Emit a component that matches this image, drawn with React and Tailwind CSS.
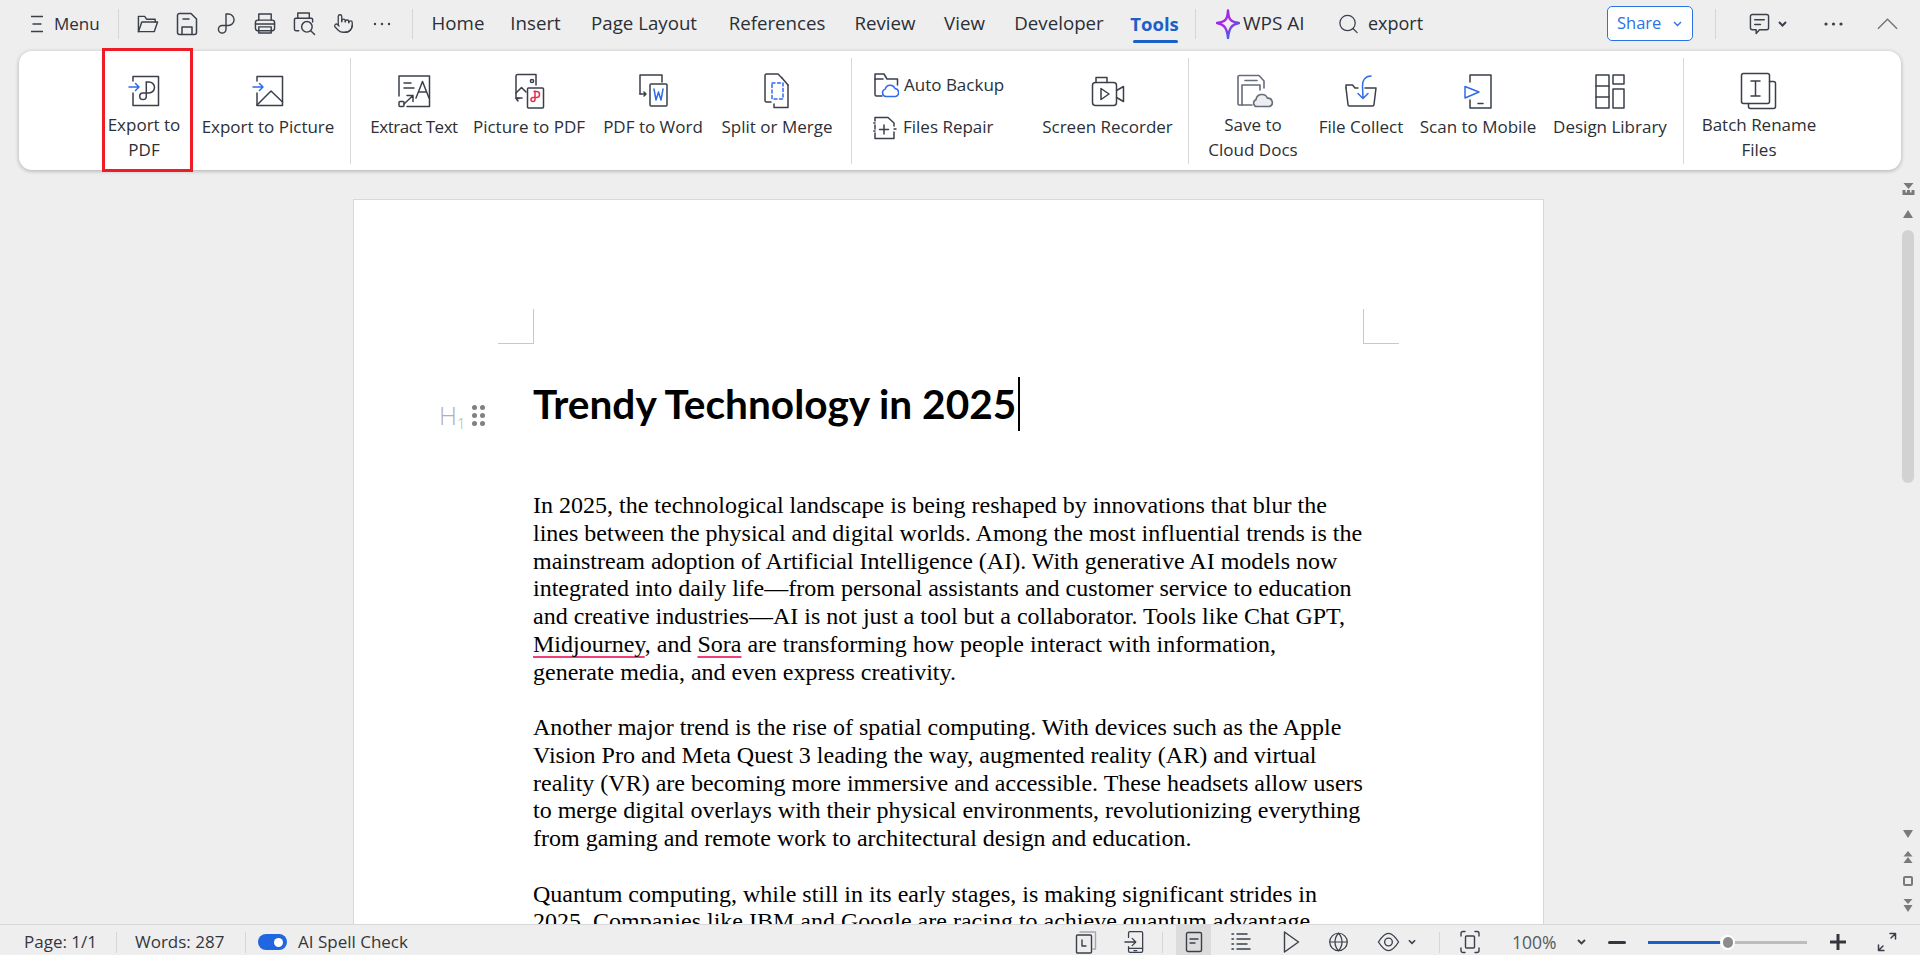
import React from "react";
import { Search, Pointer, Globe } from "lucide-react";

const INK = "#3a3f4a";
const BLUE = "#2f6bed";
const RED = "#e5304f";

function Ico({ w, h, children, sw = 1.5 }) {
  return (
    <svg width={w} height={h} viewBox={`0 0 ${w} ${h}`} fill="none" stroke={INK} strokeWidth={sw} strokeLinecap="round" strokeLinejoin="round">
      {children}
    </svg>
  );
}

const ExportPdfIcon = () => (
  <Ico w={32} h={32}>
    <path d="M5 6V1.5H30.5V30.5H5V18" />
    <path d="M1 12H11M7.5 8.5L11 12L7.5 15.5" stroke={BLUE} />
    <path d="M18 7h3a5.5 5.5 0 0 1 0 11H15a3.3 3.3 0 1 0 3.3 3.3V7" />
  </Ico>
);
const ExportPicIcon = () => (
  <Ico w={32} h={32}>
    <path d="M5 6V1.5H30.5V30.5H5V18" />
    <path d="M1 12H11M7.5 8.5L11 12L7.5 15.5" stroke={BLUE} />
    <path d="M5 30L19 16L30.5 27" />
  </Ico>
);
const ExtractIcon = () => (
  <Ico w={34} h={34}>
    <path d="M2 22V2H32.5V32.5H10" />
    <path d="M7 9H14M7 14H17" />
    <path d="M19 24L25.5 7.5L32 24M21.5 18H29.5" />
    <path d="M10 21.5H16V27.5M16 21.5L7 30" />
    <rect x="2" y="27.5" width="5" height="5" rx="1" />
  </Ico>
);
const PicPdfIcon = () => (
  <Ico w={32} h={36}>
    <path d="M3 25V3a1.5 1.5 0 0 1 1.5-1.5H23V12M3 25H9" />
    <circle cx="19" cy="8" r="1.6" />
    <path d="M3 20L8.5 14.5L13 19M5 28L3 25.5M3 25.5H6" />
    <rect x="14.5" y="15" width="16" height="20" rx="1" />
    <path d="M21 18.5h2.5a3 3 0 0 1 0 6H20a2 2 0 1 0 2 2v-8.5" stroke={RED} />
  </Ico>
);
const PdfWordIcon = () => (
  <Ico w={32} h={36}>
    <path d="M3 21V2H25V9" />
    <path d="M3 21L9 21M7 19L9 21L7 23" />
    <rect x="13" y="11" width="17" height="22" rx="1" />
    <path d="M17 16L19 27L21.5 19L24 27L26 16" stroke={BLUE} />
  </Ico>
);
const SplitIcon = () => (
  <Ico w={28} h={38}>
    <path d="M8 30H3.5A1.5 1.5 0 0 1 2 28.5V3.5A1.5 1.5 0 0 1 3.5 2H15L19 6" />
    <path d="M25 13V35.5H11V32" />
    <path d="M19 6L25 13" />
    <rect x="9" y="11" width="11" height="16" stroke={BLUE} strokeDasharray="3 2.5" />
  </Ico>
);
const BackupIcon = () => (
  <Ico w={26} h={26}>
    <path d="M9 24H3.5A1.5 1.5 0 0 1 2 22.5V2H11L14 7H24.5V13" />
    <path d="M2 7H10" />
    <path d="M13 24.5a3.8 3.8 0 0 1-.8-7.4a5.2 5.2 0 0 1 9.8-.6a4.1 4.1 0 0 1 .7 8z" stroke={BLUE} />
  </Ico>
);
const RepairIcon = () => (
  <Ico w={24} h={26}>
    <path d="M2 7V3.5H15L21 9V12M2 11V15M2 19V24.5H21V18M2 9H0.8M2 17H0.8M21 15H23" />
    <path d="M11 11V20M6.5 15.5H15.5" />
  </Ico>
);
const RecorderIcon = () => (
  <Ico w={34} h={32}>
    <rect x="1.5" y="7.5" width="24" height="23" rx="3" />
    <path d="M5 7.5V2.5H16V7.5" />
    <path d="M25.5 15.5L32.5 11.5V26.5L25.5 22.5" />
    <path d="M10 13.5L18 19L10 24.5Z" />
  </Ico>
);
const CloudDocsIcon = () => (
  <svg className="ml-[8px]" width="44" height="34" viewBox="0 0 44 34" fill="none" stroke="#666c78" strokeWidth="1.6" strokeLinecap="round" strokeLinejoin="round">
    <path d="M17 31H4.5A1.5 1.5 0 0 1 3 29.5V3A1.5 1.5 0 0 1 4.5 1.5H24L29 7V14" />
    <path d="M10 6.5H22" />
    <path d="M7 31V11H25V16" />
    <path d="M22 32.5a3.5 3.5 0 0 1-1-6.8a6 6 0 0 1 11.5-1.5a4.3 4.3 0 0 1 2 8.3z" fill="#eceef2" />
  </svg>
);
const CollectIcon = () => (
  <Ico w={34} h={34}>
    <path d="M2 14L4 30.5A1.5 1.5 0 0 0 5.5 32H28.5A1.5 1.5 0 0 0 30 30.5L32 14H21" />
    <path d="M2 14V11H8.5L11 14H14" />
    <path d="M27 2C21 2 18 7 18.5 12L19 24M14 19.5L19 24.5L24 19.5" stroke={BLUE} />
  </Ico>
);
const ScanIcon = () => (
  <Ico w={28} h={36}>
    <path d="M6 9V2H27V35H6V27" />
    <path d="M1 13.5L15 19L1 25V13.5Z" stroke={BLUE} />
    <path d="M14 30.5H19" />
  </Ico>
);
const LibraryIcon = () => (
  <Ico w={32} h={36}>
    <rect x="2" y="2" width="13" height="33" />
    <path d="M2 13H15M2 24H15" />
    <rect x="19" y="2" width="11" height="9" />
    <rect x="19" y="16" width="11" height="19" />
  </Ico>
);
const RenameIcon = () => (
  <Ico w={38} h={38}>
    <rect x="1.5" y="1.5" width="28" height="30" rx="2" />
    <path d="M29.5 9.5H33.5A2 2 0 0 1 35.5 11.5V34.5A2 2 0 0 1 33.5 36.5H10.5A2 2 0 0 1 8.5 34.5V31.5" />
    <path d="M11 9H20M11 24H20M15.5 9V24" />
  </Ico>
);

function Item({ w, two, icon, tc = "", children }) {
  return (
    <div className={`${w} flex flex-col items-center pt-[23px] shrink-0`}>
      <div className="h-[34px] flex items-center justify-center">{icon}</div>
      <div className={`${two ? "mt-[4px]" : "mt-[6px]"} text-center text-[17px] leading-[25px] whitespace-nowrap ${tc}`}>{children}</div>
    </div>
  );
}

const RibbonSep = ({ className = "" }) => <div className={`w-px h-[106px] self-center bg-[#d8d8d8] shrink-0 ${className}`} />;
const TopSep = ({ className }) => <div className={`w-px h-[30px] bg-[#d6d6d6] shrink-0 ${className}`} />;

const Tab = ({ className, children }) => <div className={`flex justify-center text-[18.7px] whitespace-nowrap shrink-0 ${className}`}>{children}</div>;

function ToolSlot({ className, children }) {
  return <div className={`flex items-center justify-center shrink-0 ${className}`}>{children}</div>;
}

const Line = ({ children }) => <div className="whitespace-nowrap">{children}</div>;
const Sp = ({ children }) => <span className="underline decoration-[#f0407a] decoration-2 underline-offset-[4px] [text-decoration-skip-ink:none]">{children}</span>;

function Tri({ d }) {
  return (
    <svg width="12" height="12" viewBox="0 0 12 12" fill="#7a7a7a">
      <path d={d} />
    </svg>
  );
}

export default function App() {
  return (
    <div className="h-screen w-full overflow-hidden flex flex-col bg-[#eeeeee] text-[#2b2f36] font-['Open_Sans','Noto_Sans',sans-serif]">
      {/* Title bar */}
      <header className="h-[51px] shrink-0 flex items-center pb-[4px]">
        <ToolSlot className="ml-[31px] w-[12px]">
          <svg width="12" height="18" viewBox="0 0 12 18" stroke={INK} strokeWidth="1.4"><path d="M0 1.5H12M1.5 9H10.5M0 16.5H12" /></svg>
        </ToolSlot>
        <div className="ml-[11px] w-[46px] text-[17px] whitespace-nowrap">Menu</div>
        <TopSep className="ml-[18px]" />
        <ToolSlot className="ml-[18px] w-[22px]">
          <Ico w={23} h={20}>
            <path d="M1.5 18V2H8L10 5H19V8" />
            <path d="M1.5 18L5 8H21.5L18 18Z" />
          </Ico>
        </ToolSlot>
        <ToolSlot className="ml-[17px] w-[22px]">
          <Ico w={22} h={24}>
            <path d="M6 1.5H15L20.5 7V20.5A2 2 0 0 1 18.5 22.5H3.5A2 2 0 0 1 1.5 20.5V3.5A2 2 0 0 1 3.5 1.5H6Z" />
            <path d="M7 7H13" />
            <path d="M6 22V15H16V22" />
          </Ico>
        </ToolSlot>
        <ToolSlot className="ml-[19px] w-[18px]">
          <Ico w={19} h={24}>
            <path d="M9.5 1.5H12a6 6 0 0 1 0 12H5.5a4 4 0 1 0 4 4V1.5" />
          </Ico>
        </ToolSlot>
        <ToolSlot className="ml-[19px] w-[22px]">
          <Ico w={23} h={23}>
            <path d="M5 8V1.5H18V8" />
            <rect x="1.5" y="8" width="20" height="11" rx="2.5" />
            <path d="M5 15V21.5H18V15Z" />
            <path d="M1.5 12H21.5" />
          </Ico>
        </ToolSlot>
        <ToolSlot className="ml-[17px] w-[23px]">
          <Ico w={24} h={25}>
            <path d="M5 7V1.5H17V7" />
            <path d="M6 20H3A1.5 1.5 0 0 1 1.5 18.5V8.5A1.5 1.5 0 0 1 3 7H19A1.5 1.5 0 0 1 20.5 8.5V11" />
            <circle cx="14.5" cy="16" r="5.5" />
            <path d="M18.5 20L22.5 24" />
          </Ico>
        </ToolSlot>
        <ToolSlot className="ml-[17px] w-[21px]">
          <Pointer size={25} strokeWidth={1.5} color={INK} />
        </ToolSlot>
        <ToolSlot className="ml-[18px] w-[20px]">
          <svg width="20" height="4" viewBox="0 0 20 4" fill={INK}><circle cx="3" cy="2" r="1.2" /><circle cx="10" cy="2" r="1.2" /><circle cx="17" cy="2" r="1.2" /></svg>
        </ToolSlot>
        <TopSep className="ml-[20px]" />
        <Tab className="ml-[19px] w-[52px]">Home</Tab>
        <Tab className="ml-[28px] w-[47px]">Insert</Tab>
        <Tab className="ml-[33px] w-[104px]">Page Layout</Tab>
        <Tab className="ml-[36px] w-[90px]">References</Tab>
        <Tab className="ml-[33px] w-[60px]">Review</Tab>
        <Tab className="ml-[29px] w-[41px]">View</Tab>
        <Tab className="ml-[29px] w-[90px]">Developer</Tab>
        <div className="relative ml-[26px] w-[49px] shrink-0 flex justify-center">
          <div className="text-[18.5px] font-bold text-[#1b5fc9] whitespace-nowrap">Tools</div>
          <div className="absolute left-[3px] right-[1px] top-[30px] h-[3px] rounded-full bg-[#1b5fc9]" />
        </div>
        <TopSep className="ml-[16px]" />
        <ToolSlot className="ml-[20px] w-[24px]">
          <svg width="24" height="30" viewBox="0 0 24 30" fill="none" strokeWidth="2.4" strokeLinejoin="round">
            <defs>
              <linearGradient id="st" x1="0" y1="0" x2="0.7" y2="1">
                <stop offset="0" stopColor="#7b2ff7" />
                <stop offset="0.5" stopColor="#b026e0" />
                <stop offset="1" stopColor="#2f6bed" />
              </linearGradient>
            </defs>
            <path d="M12 1.5C12.5 10 14 13 23 14C15 15.5 13 20 12 29C11 20 9 15.5 1 14C10 13 11.5 10 12 1.5Z" stroke="url(#st)" />
          </svg>
        </ToolSlot>
        <div className="ml-[3px] w-[64px] text-[19px] whitespace-nowrap">WPS AI</div>
        <ToolSlot className="ml-[30px] w-[23px]">
          <Search size={28} strokeWidth={1.3} color={INK} />
        </ToolSlot>
        <div className="ml-[8px] w-[54px] text-[18px] whitespace-nowrap">export</div>
        <div className="ml-[185px] w-[86px] h-[35px] shrink-0 rounded-[5px] border border-[#2a72e6] bg-white flex items-center text-[#2a72e6] text-[16.5px] pl-[9px] gap-[12px]">
          <span>Share</span>
          <svg width="9" height="6" viewBox="0 0 9 6" fill="none" stroke="#2a72e6" strokeWidth="1.4"><path d="M1 1L4.5 4.5L8 1" /></svg>
        </div>
        <TopSep className="ml-[22px]" />
        <ToolSlot className="ml-[33px] w-[21px]">
          <Ico w={22} h={24}>
            <path d="M3.5 2H18.5A2 2 0 0 1 20.5 4V16A2 2 0 0 1 18.5 18H11L7.5 22V18H3.5A2 2 0 0 1 1.5 16V4A2 2 0 0 1 3.5 2Z" />
            <path d="M6 7.5H16M6 12.5H12" />
          </Ico>
        </ToolSlot>
        <ToolSlot className="ml-[8px] w-[9px]">
          <svg width="9" height="6" viewBox="0 0 9 6" fill="none" stroke={INK} strokeWidth="2"><path d="M1 1L4.5 4.5L8 1" /></svg>
        </ToolSlot>
        <ToolSlot className="ml-[37px] w-[19px]">
          <svg width="19" height="4" viewBox="0 0 19 4" fill={INK}><circle cx="2" cy="2" r="1.6" /><circle cx="9.5" cy="2" r="1.6" /><circle cx="17" cy="2" r="1.6" /></svg>
        </ToolSlot>
        <ToolSlot className="ml-[34px] w-[21px]">
          <svg width="22" height="12" viewBox="0 0 22 12" fill="none" stroke="#6e727a" strokeWidth="1.4"><path d="M1 11L11 1L21 11" /></svg>
        </ToolSlot>
      </header>

      {/* Ribbon */}
      <section className="h-[119px] shrink-0 ml-[19px] mr-[19px] rounded-[13px] bg-white shadow-[0_1px_4px_rgba(0,0,0,0.28)] flex pl-[83px]">
        <div className="relative shrink-0">
          <div className="w-[91px] pr-[5px]">
            <Item w="w-[84px]" two icon={<ExportPdfIcon />}>Export to<br />PDF</Item>
          </div>
          <div className="absolute left-0 right-0 -top-[3px] -bottom-[2px] border-[3px] border-[#ee1c25]" />
        </div>
        <Item w="w-[150px]" icon={<ExportPicIcon />}>Export to Picture</Item>
        <RibbonSep className="ml-[7px]" />
        <Item w="w-[126px]" tc="tracking-[-0.5px]" icon={<ExtractIcon />}>Extract Text</Item>
        <Item w="w-[104px]" icon={<PicPdfIcon />}>Picture to PDF</Item>
        <Item w="w-[144px]" icon={<PdfWordIcon />}>PDF to Word</Item>
        <Item w="w-[104px]" icon={<SplitIcon />}>Split or Merge</Item>
        <RibbonSep className="ml-[22px]" />
        <div className="w-[172px] shrink-0 pl-[21px] pt-[21px] flex flex-col gap-[17px]">
          <div className="h-[25px] flex items-center gap-[5px] text-[17px] whitespace-nowrap"><BackupIcon /><span>Auto Backup</span></div>
          <div className="h-[25px] flex items-center gap-[6px] text-[17px] whitespace-nowrap"><RepairIcon /><span>Files Repair</span></div>
        </div>
        <div className="pl-[3px] shrink-0"><Item w="w-[161px]" icon={<RecorderIcon />}>Screen Recorder</Item></div>
        <RibbonSep />
        <Item w="w-[128px]" two icon={<CloudDocsIcon />}>Save to<br />Cloud Docs</Item>
        <Item w="w-[88px]" icon={<CollectIcon />}>File Collect</Item>
        <Item w="w-[146px]" icon={<ScanIcon />}>Scan to Mobile</Item>
        <Item w="w-[118px]" icon={<LibraryIcon />}>Design Library</Item>
        <RibbonSep className="ml-[14px]" />
        <Item w="w-[150px]" two icon={<RenameIcon />}>Batch Rename<br />Files</Item>
      </section>

      {/* Document area */}
      <main className="flex-1 min-h-0 flex overflow-hidden">
        <div className="flex-1 min-w-0 flex justify-center pt-[29px]">
          <div className="w-[1191px] h-[1540px] shrink-0 bg-white border border-[#d8d8d8] relative pt-[109px]">
            <div className="flex justify-between px-[144px] h-[35px]">
              <div className="w-[36px] h-[35px] border-r border-b border-[#c8c8c8]" />
              <div className="w-[36px] h-[35px] border-l border-b border-[#c8c8c8]" />
            </div>
            <div className="relative ml-[179px] mt-[28px] h-[64px] flex items-center">
              <h1 className="font-['Lato','Carlito',sans-serif] font-bold text-[40.6px] leading-[64px] text-black whitespace-nowrap">Trendy Technology in 2025</h1>
              <div className="w-[2px] h-[54px] bg-black ml-[2px]" />
              <div className="absolute -left-[94px] top-[31px] flex items-center gap-[6px]">
                <span className="text-[#b0b0b0] font-['Open_Sans',sans-serif] font-light text-[25px] leading-[24px]">H<sub className="text-[15px]">1</sub></span>
                <div className="grid grid-cols-2 gap-x-[3px] gap-y-[3px]">
                  {[0, 1, 2, 3, 4, 5].map((i) => <div key={i} className="w-[5px] h-[5px] rounded-full bg-[#808080]" />)}
                </div>
              </div>
            </div>
            <div className="ml-[179px] mt-[56px] font-['Liberation_Serif',serif] text-[24px] leading-[27.75px] text-black">
              <Line>In 2025, the technological landscape is being reshaped by innovations that blur the</Line>
              <Line>lines between the physical and digital worlds. Among the most influential trends is the</Line>
              <Line>mainstream adoption of Artificial Intelligence (AI). With generative AI models now</Line>
              <Line>integrated into daily life—from personal assistants and customer service to education</Line>
              <Line>and creative industries—AI is not just a tool but a collaborator. Tools like Chat GPT,</Line>
              <Line><Sp>Midjourney</Sp>, and <Sp>Sora</Sp> are transforming how people interact with information,</Line>
              <Line>generate media, and even express creativity.</Line>
              <Line>&nbsp;</Line>
              <Line>Another major trend is the rise of spatial computing. With devices such as the Apple</Line>
              <Line>Vision Pro and Meta Quest 3 leading the way, augmented reality (AR) and virtual</Line>
              <Line>reality (VR) are becoming more immersive and accessible. These headsets allow users</Line>
              <Line>to merge digital overlays with their physical environments, revolutionizing everything</Line>
              <Line>from gaming and remote work to architectural design and education.</Line>
              <Line>&nbsp;</Line>
              <Line>Quantum computing, while still in its early stages, is making significant strides in</Line>
              <Line>2025. Companies like IBM and Google are racing to achieve quantum advantage</Line>
            </div>
          </div>
        </div>
        {/* Scrollbar */}
        <div className="w-[23px] shrink-0 pl-[5px] flex flex-col items-center pr-[6px]">
          <div className="mt-[13px] h-[14px]">
            <svg width="13" height="13" viewBox="0 0 13 13" fill="#7a7a7a"><path d="M1.5 0H11.5L6.5 6Z" /><path d="M0.5 7H3.5V9.5H5V7H8V9.5H9.5V7H12.5V12H0.5Z" /></svg>
          </div>
          <div className="mt-[11px] h-[12px]"><Tri d="M6 2L11 10H1Z" /></div>
          <div className="mt-[10px] w-[12px] h-[253px] rounded-full bg-[#d2d2d2] shrink-0" />
          <div className="mt-[345px] h-[12px]"><Tri d="M1 2H11L6 10Z" /></div>
          <div className="mt-[11px] h-[14px]">
            <svg width="12" height="14" viewBox="0 0 12 14" fill="#7a7a7a"><path d="M6 0L10.5 5.5H1.5Z" /><path d="M6 6L10.5 12H1.5Z" /></svg>
          </div>
          <div className="mt-[10px] h-[12px]">
            <svg width="12" height="12" viewBox="0 0 12 12" fill="none" stroke="#7a7a7a" strokeWidth="2"><rect x="2" y="2" width="8" height="8" rx="1" /></svg>
          </div>
          <div className="mt-[12px] h-[14px]">
            <svg width="12" height="14" viewBox="0 0 12 14" fill="#7a7a7a"><path d="M1.5 0H10.5L6 5Z" /><path d="M1.5 6H10.5L6 13Z" /></svg>
          </div>
        </div>
      </main>

      {/* Status bar */}
      <footer className="h-[31px] shrink-0 border-t border-[#d8d8d8] bg-[#eeeeee] flex items-center pt-[4px] text-[17px] text-[#33373d] relative z-10">
        <div className="ml-[24px] w-[73px] whitespace-nowrap">Page: 1/1</div>
        <div className="ml-[19px] w-px h-[21px] bg-[#d6d6d6]" />
        <div className="ml-[18px] w-[91px] whitespace-nowrap">Words: 287</div>
        <div className="ml-[19px] w-px h-[21px] bg-[#d6d6d6]" />
        <div className="ml-[12px] w-[29px] h-[16px] rounded-full bg-[#1f66e0] flex items-center justify-end pr-[4px]">
          <div className="w-[9px] h-[9px] rounded-full bg-white" />
        </div>
        <div className="ml-[11px] w-[111px] whitespace-nowrap">AI Spell Check</div>

        <ToolSlot className="ml-[666px] w-[22px]">
          <Ico w={22} h={24} sw={1.4}>
            <path d="M5 2H20.5V19H18" stroke="#a5a8ae" />
            <rect x="1.5" y="5" width="15" height="18" rx="1" />
            <path d="M7 10V16H11" />
          </Ico>
        </ToolSlot>
        <ToolSlot className="ml-[27px] w-[20px]">
          <Ico w={22} h={26} sw={1.4}>
            <path d="M5 8V3A1.5 1.5 0 0 1 6.5 1.5H19A1.5 1.5 0 0 1 20.5 3V23A1.5 1.5 0 0 1 19 24.5H6.5A1.5 1.5 0 0 1 5 23V18" />
            <path d="M1 13H13M9 9L13 13L9 17" />
            <path d="M5 20H20M11 22.5H14" />
          </Ico>
        </ToolSlot>
        <div className="ml-[18px] w-px h-[21px] bg-[#d6d6d6]" />
        <ToolSlot className="ml-[13px] w-[35px] h-[30px] -mt-[4px] bg-[#dcdcdc] pt-[4px]">
          <Ico w={18} h={22} sw={1.4}>
            <rect x="1.5" y="1.5" width="15" height="19" rx="1.5" />
            <path d="M5 8H13M5 12H10" />
          </Ico>
        </ToolSlot>
        <ToolSlot className="ml-[20px] w-[20px]">
          <Ico w={20} h={20} sw={1.5}>
            <path d="M1 2H2.5M6 2H16M1 7H2.5M6 7H19M1 12H2.5M6 12H16M1 17H2.5M6 17H19" />
          </Ico>
        </ToolSlot>
        <ToolSlot className="ml-[32px] w-[17px]">
          <Ico w={17} h={24} sw={1.4}><path d="M1.5 2L15.5 12L1.5 22Z" /></Ico>
        </ToolSlot>
        <ToolSlot className="ml-[28px] w-[21px]">
          <Globe size={22} strokeWidth={1.4} color={INK} />
        </ToolSlot>
        <ToolSlot className="ml-[28px] w-[23px]">
          <Ico w={24} h={22} sw={1.4}>
            <path d="M1.5 11C6 4 9 2 12 2C15 2 18 4 22.5 11C18 18 15 20 12 20C9 20 6 18 1.5 11Z" />
            <circle cx="12" cy="11" r="4" />
          </Ico>
        </ToolSlot>
        <ToolSlot className="ml-[8px] w-[8px]">
          <svg width="9" height="6" viewBox="0 0 9 6" fill="none" stroke={INK} strokeWidth="1.8"><path d="M1 1L4.5 4.5L8 1" /></svg>
        </ToolSlot>
        <div className="ml-[23px] w-px h-[21px] bg-[#d6d6d6]" />
        <ToolSlot className="ml-[20px] w-[20px]">
          <Ico w={20} h={24} sw={1.4}>
            <path d="M1 6V3.5A2 2 0 0 1 3 1.5H5M15 1.5H17A2 2 0 0 1 19 3.5V6M19 18V20.5A2 2 0 0 1 17 22.5H15M5 22.5H3A2 2 0 0 1 1 20.5V18" />
            <rect x="5.5" y="6" width="9" height="12" rx="1" />
          </Ico>
        </ToolSlot>
        <div className="ml-[32px] w-[44px] whitespace-nowrap text-[#555a62] text-[17.5px]">100%</div>
        <ToolSlot className="ml-[21px] w-[9px]">
          <svg width="9" height="6" viewBox="0 0 9 6" fill="none" stroke={INK} strokeWidth="1.8"><path d="M1 1L4.5 4.5L8 1" /></svg>
        </ToolSlot>
        <div className="ml-[22px] w-[18px] h-[3px] rounded-full bg-[#33373d]" />
        <div className="ml-[22px] w-[159px] h-[3px] flex relative">
          <div className="w-[80px] bg-[#1b5fc9]" />
          <div className="flex-1 bg-[#bdbdbd]" />
          <div className="absolute left-[72px] -top-[6px] w-[15px] h-[15px] rounded-full bg-white flex items-center justify-center">
            <div className="w-[10px] h-[11px] rounded-full bg-[#8c8c8c]" />
          </div>
        </div>
        <ToolSlot className="ml-[22px] w-[18px]">
          <svg width="18" height="18" viewBox="0 0 18 18" stroke="#33373d" strokeWidth="3"><path d="M1 9H17M9 1V17" /></svg>
        </ToolSlot>
        <ToolSlot className="ml-[30px] w-[20px]">
          <Ico w={20} h={20} sw={1.5}>
            <path d="M13 1.5H18.5V7M18.5 1.5L14 6M7 18.5H1.5V13M1.5 18.5L6 14" />
          </Ico>
        </ToolSlot>
      </footer>
    </div>
  );
}
